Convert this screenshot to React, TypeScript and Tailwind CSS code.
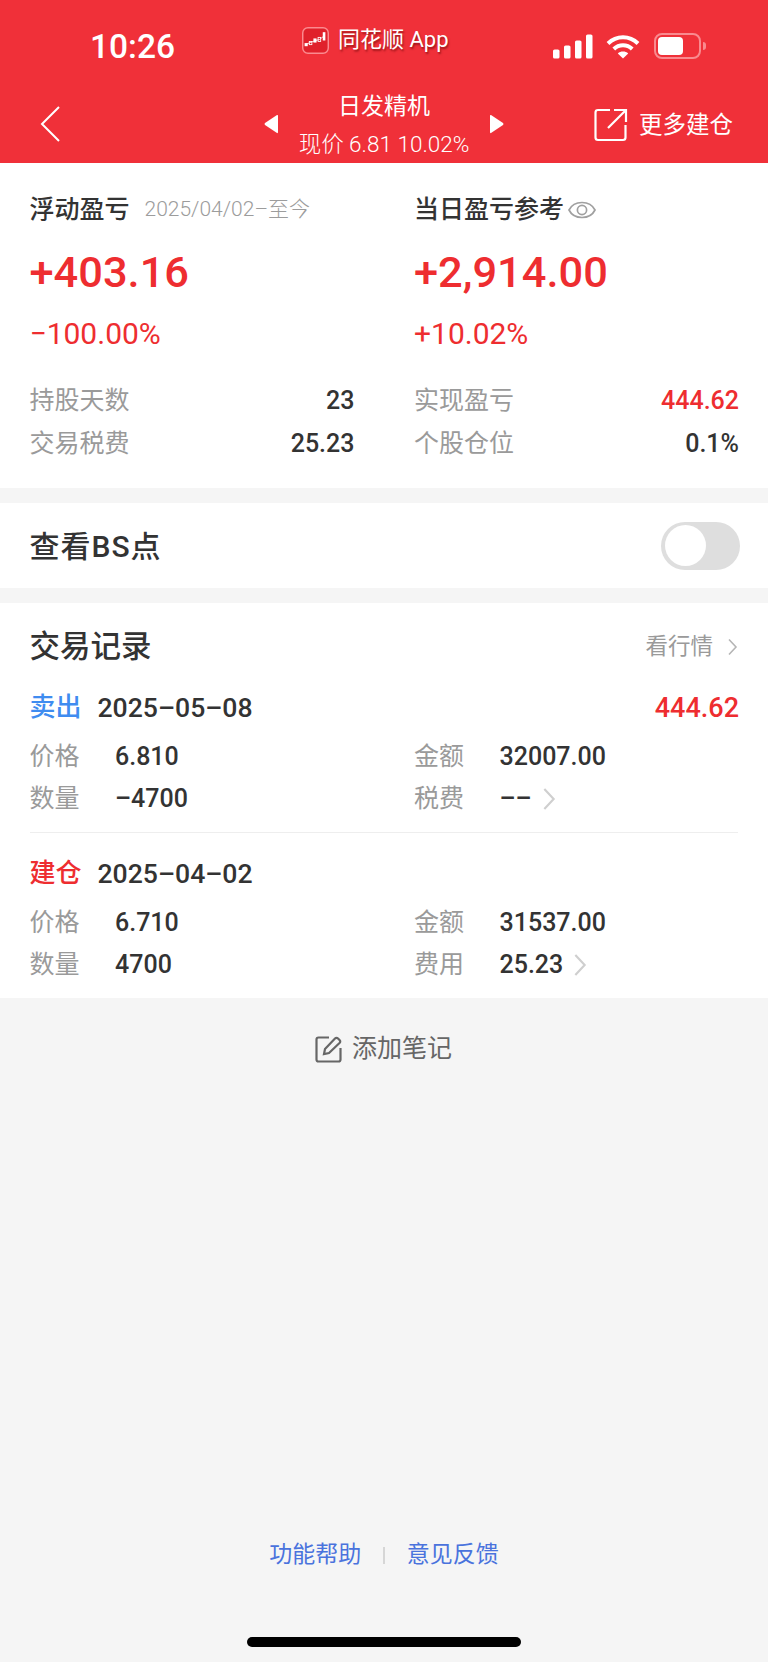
const font = "font-['Roboto','Noto_Sans_CJK_SC',sans-serif]";

function Chevron({ className }: { className: string }) {
  return (
    <svg viewBox="0 0 10 18" fill="none" className={className}>
      <path d="M1.5 1.5 L8.5 9 L1.5 16.5" stroke="currentColor" strokeWidth="1.6" />
    </svg>
  );
}

function Stat({ label, value, valueClass = "text-[#333]" }: { label: string; value: string; valueClass?: string }) {
  return (
    <div className="flex h-[43px] items-center justify-between">
      <span className="text-[25px] text-[#9a9a9a]">{label}</span>
      <span className={`text-[25px] font-medium ${valueClass}`}>{value}</span>
    </div>
  );
}

function Field({ label, children }: { label: string; children: React.ReactNode }) {
  return (
    <div className="flex h-[42px] items-center">
      <span className="w-[85.5px] text-[25px] text-[#9a9a9a]">{label}</span>
      <span className="flex items-center text-[25px] font-medium text-[#333]">{children}</span>
    </div>
  );
}

function Trade({
  kind,
  kindClass,
  date,
  amount,
  price,
  total,
  qty,
  feeLabel,
  fee,
}: {
  kind: string;
  kindClass: string;
  date: string;
  amount?: string;
  price: string;
  total: string;
  qty: string;
  feeLabel: string;
  fee: string;
}) {
  return (
    <div className="pr-[29px] pl-[29.5px]">
      <div className="flex h-[40px] items-center justify-between">
        <div className="flex items-center">
          <span className={`w-[68px] text-[26px] font-medium ${kindClass}`}>{kind}</span>
          <span className="text-[26.6px] font-medium text-[#333]">{date}</span>
        </div>
        {amount && <span className="text-[27px] font-medium text-[#ee2d30]">{amount}</span>}
      </div>
      <div className="mt-[8px] flex">
        <div className="w-[384.5px]">
          <Field label="价格">{price}</Field>
          <Field label="数量">{qty}</Field>
        </div>
        <div>
          <Field label="金额">{total}</Field>
          <Field label={feeLabel}>
            {fee}
            <Chevron className="ml-[10px] h-[24px] w-[14px] text-[#cfcfcf]" />
          </Field>
        </div>
      </div>
    </div>
  );
}

export default function App() {
  return (
    <div className={`flex min-h-[1662px] w-[768px] flex-col bg-[#f5f5f5] ${font}`}>
      <header className="h-[163px] bg-[#f03039] text-white">
        <div className="flex h-[92px] items-start pt-[26px]">
          <span className="ml-[90px] w-[212px] pt-[1px] text-[33.5px] leading-[40px] font-medium">10:26</span>
          <div className="flex w-[251px] items-center">
            <svg viewBox="0 0 26 26" className="h-[27px] w-[27px]">
              <rect x="0.7" y="0.7" width="24.6" height="24.6" rx="5" fill="#e0212b" stroke="#fb8a8f" strokeWidth="1.4" />
              <path d="M3 17 L8 15 L13 13 L17 12 L22 8" stroke="#fff" strokeWidth="0.8" fill="none" />
              <rect x="2.5" y="15.5" width="3" height="3" fill="#fff" />
              <rect x="7" y="14" width="2.5" height="3" fill="none" stroke="#fff" strokeWidth="0.8" />
              <rect x="11" y="11" width="3" height="4" fill="#fff" />
              <rect x="15.5" y="10" width="2.5" height="4" fill="none" stroke="#fff" strokeWidth="0.8" />
              <rect x="20" y="5" width="2.5" height="8" fill="#fff" />
            </svg>
            <span className="ml-[9px] text-[22px] leading-[28px] [text-shadow:1px_2px_2px_rgba(90,0,0,0.55)]">同花顺 App</span>
          </div>
          <div className="mt-[7px] flex items-center">
            <svg viewBox="0 0 40 24" className="h-[25px] w-[40px]" fill="#fff">
              <rect x="0" y="15" width="6.5" height="9" rx="1.6" />
              <rect x="11" y="11" width="6.5" height="13" rx="1.6" />
              <rect x="22" y="6" width="6.5" height="18" rx="1.6" />
              <rect x="33" y="0" width="6.5" height="24" rx="1.6" />
            </svg>
            <svg viewBox="0 0 34 25" className="ml-[13px] h-[25px] w-[34px]" fill="none" stroke="#fff">
              <path d="M2 9.5 C10.5 1.3 23.5 1.3 32 9.5" strokeWidth="4" />
              <path d="M7.8 15 C13 10 21 10 26.2 15" strokeWidth="4" />
              <path d="M17 24.5 L11.8 19.4 C14.6 16.9 19.4 16.9 22.2 19.4 Z" fill="#fff" stroke="none" />
            </svg>
            <div className="ml-[14px] flex h-[26px] w-[47px] items-center rounded-[8px] border-2 border-[#f98a8f] p-[2px]">
              <div className="h-full w-[25px] rounded-[4px] bg-white" />
            </div>
            <div className="ml-[2px] h-[8px] w-[3px] rounded-r-full bg-[#f98a8f]" />
          </div>
        </div>
        <div className="flex h-[71px] items-start">
          <svg viewBox="0 0 20 36" fill="none" className="mt-[14px] ml-[40px] h-[36px] w-[20px]">
            <path d="M19 1 L2 18 L19 35" stroke="#fff" strokeWidth="2" />
          </svg>
          <svg viewBox="0 0 14 20" className="mt-[22px] ml-[204px] h-[20px] w-[14px]" fill="#fff">
            <path d="M13 1 Q14 0.5 14 2 L14 18 Q14 19.5 13 19 L1 11 Q0 10 1 9 Z" />
          </svg>
          <div className="flex w-[212px] flex-col items-center">
            <span className="mt-[1px] text-[23px] leading-[28px]">日发精机</span>
            <span className="mt-[10px] text-[22.5px] leading-[26px] font-light whitespace-nowrap">现价 6.81 10.02%</span>
          </div>
          <svg viewBox="0 0 14 20" className="mt-[22px] h-[20px] w-[14px]" fill="#fff">
            <path d="M1 1 Q0 0.5 0 2 L0 18 Q0 19.5 1 19 L13 11 Q14 10 13 9 Z" />
          </svg>
          <svg viewBox="0 0 34 34" fill="none" className="mt-[16px] ml-[90px] h-[34px] w-[34px]" stroke="#fff" strokeWidth="2.2">
            <path d="M16 2 H4 Q1.5 2 1.5 4.5 V29.5 Q1.5 32 4 32 H29 Q31.5 32 31.5 29.5 V17" />
            <path d="M14 20 L31 3 M20 2 H32 V14" />
          </svg>
          <span className="mt-[18px] ml-[11px] text-[23.5px] leading-[30px]">更多建仓</span>
        </div>
      </header>

      <section className="h-[325px] bg-white pr-[29px] pl-[29.5px]">
        <div className="flex pt-[28px]">
          <div className="w-[384.5px]">
            <div className="flex h-[38px] items-center">
              <span className="text-[25px] font-medium text-[#333]">浮动盈亏</span>
              <span className="ml-[15px] text-[21px] font-light text-[#9c9c9c]">2025/04/02–至今</span>
            </div>
            <div className="mt-[12px] h-[64px] text-[43.4px] leading-[64px] font-medium text-[#ee2d30]">+403.16</div>
            <div className="mt-[9px] h-[40px] text-[30px] leading-[40px] text-[#ee2d30]">−100.00%</div>
          </div>
          <div className="flex-1">
            <div className="flex h-[38px] items-center">
              <span className="text-[25px] font-medium text-[#333]">当日盈亏参考</span>
              <svg viewBox="0 0 28 22" fill="none" stroke="#a0a0a0" strokeWidth="1.7" className="ml-[4px] h-[22px] w-[28px]">
                <path d="M1 11 C6 1 22 1 27 11 C22 21 6 21 1 11 Z" />
                <circle cx="14" cy="11" r="4.6" />
              </svg>
            </div>
            <div className="mt-[12px] h-[64px] text-[43.4px] leading-[64px] font-medium text-[#ee2d30]">+2,914.00</div>
            <div className="mt-[9px] h-[40px] text-[30px] leading-[40px] text-[#ee2d30]">+10.02%</div>
          </div>
        </div>
        <div className="mt-[25px] flex">
          <div className="w-[325px]">
            <Stat label="持股天数" value="23" />
            <Stat label="交易税费" value="25.23" />
          </div>
          <div className="ml-[59.5px] flex-1">
            <Stat label="实现盈亏" value="444.62" valueClass="text-[#ee2d30]" />
            <Stat label="个股仓位" value="0.1%" />
          </div>
        </div>
      </section>

      <section className="mt-[15px] flex h-[85px] items-center justify-between bg-white pt-[2px] pr-[28px] pl-[29.5px]">
        <span className="text-[30px] font-medium tracking-[1px] text-[#333]">查看BS点</span>
        <div className="-mt-[2px] flex h-[48px] w-[79px] items-center rounded-full bg-[#dedede] pl-[4px]">
          <div className="h-[41px] w-[41px] rounded-full bg-white" />
        </div>
      </section>

      <section className="mt-[15px] h-[395px] bg-white">
        <div className="flex h-[85px] items-center justify-between pt-[3px] pr-[30px] pl-[29.5px]">
          <span className="text-[30.5px] font-medium text-[#333]">交易记录</span>
          <div className="flex items-center text-[#9a9a9a]">
            <span className="text-[22.5px]">看行情</span>
            <Chevron className="ml-[14px] h-[18px] w-[11px] text-[#b5b5b5]" />
          </div>
        </div>
        <Trade kind="卖出" kindClass="text-[#3f8cf0]" date="2025–05–08" amount="444.62" price="6.810" total="32007.00" qty="–4700" feeLabel="税费" fee="––" />
        <div className="mx-[30px] mt-[12px] h-px bg-[#eeeeee]" />
        <div className="pt-[21px]">
          <Trade kind="建仓" kindClass="text-[#ee2d30]" date="2025–04–02" price="6.710" total="31537.00" qty="4700" feeLabel="费用" fee="25.23" />
        </div>
      </section>

      <div className="mt-[36px] flex items-center justify-center pr-[1px]">
        <svg viewBox="0 0 28 28" fill="none" stroke="#666" strokeWidth="2.2" className="h-[28px] w-[28px]">
          <path d="M14 2.5 H3.5 Q1.5 2.5 1.5 4.5 V24.5 Q1.5 26.5 3.5 26.5 H23.5 Q25.5 26.5 25.5 24.5 V13" />
          <path d="M9 19 L10 14 L20 3.5 Q21.5 2 23 3.5 L24.5 5 Q26 6.5 24.5 8 L14 18 Z" />
        </svg>
        <span className="ml-[9px] text-[25px] leading-[30px] text-[#666]">添加笔记</span>
      </div>

      <div className="mt-auto flex flex-col items-center">
        <div className="flex h-[30px] items-center text-[23px] text-[#4a73dd]">
          <span>功能帮助</span>
          <span className="mx-[22px] h-[17px] w-[1.5px] bg-[#d6d6d6]" />
          <span>意见反馈</span>
        </div>
        <div className="mt-[67px] mb-[15px] h-[10px] w-[274px] rounded-full bg-black" />
      </div>
    </div>
  );
}
